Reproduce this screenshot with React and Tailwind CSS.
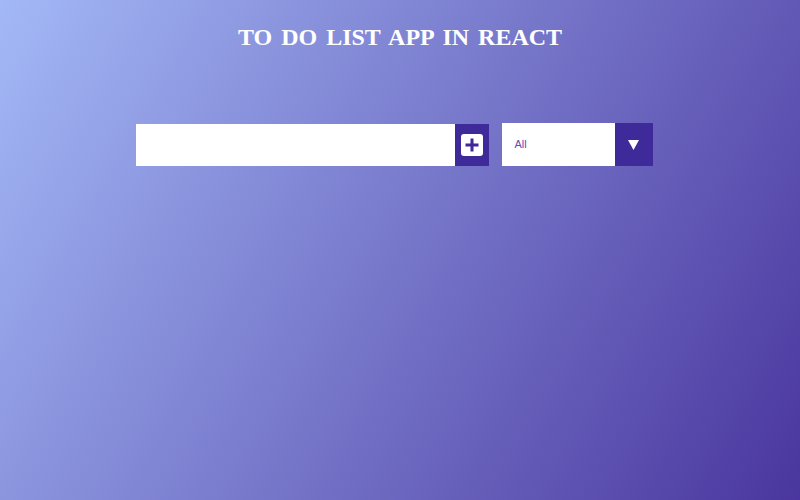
export default function App() {
  return (
    <div className="w-full h-[500px] overflow-hidden bg-[linear-gradient(120deg,#a3b8f6_0%,#4a369e_100%)] flex flex-col items-center" style={{ fontFamily: '"Liberation Sans", Arial, sans-serif' }}>
      <h1 className="mt-[22px] h-[30px] text-white font-bold text-[24px] leading-[30px] [word-spacing:3px]" style={{ fontFamily: '"Liberation Serif", "DejaVu Serif", serif' }}>
        TO DO LIST APP IN REACT
      </h1>
      <div className="mt-[71px] flex items-center gap-[13px] mr-[12px]">
        <div className="flex h-[42px]">
          <input className="w-[319px] h-full bg-white outline-none px-3 text-[14px] text-[#5b3aa5]" type="text" />
          <button className="w-[34px] h-full bg-[#3f2a99] flex items-center justify-center">
            <span className="w-[22px] h-[22px] bg-white rounded-[3px] flex items-center justify-center">
              <svg width="14" height="14" viewBox="0 0 14 14">
                <rect x="5.5" y="0.5" width="3" height="13" fill="#40279a" />
                <rect x="0.5" y="5.5" width="13" height="3" fill="#40279a" />
              </svg>
            </span>
          </button>
        </div>
        <div className="flex h-[43px]">
          <div className="w-[113px] h-full bg-white flex items-center pl-[13px] text-[11px] text-[#6b46b3]">All</div>
          <div className="w-[38px] h-full bg-[#3f2a99] flex items-center justify-center">
            <svg width="11" height="10" viewBox="0 0 11 10">
              <polygon points="0,0 11,0 5.5,10" fill="white" />
            </svg>
          </div>
        </div>
      </div>
    </div>
  );
}
